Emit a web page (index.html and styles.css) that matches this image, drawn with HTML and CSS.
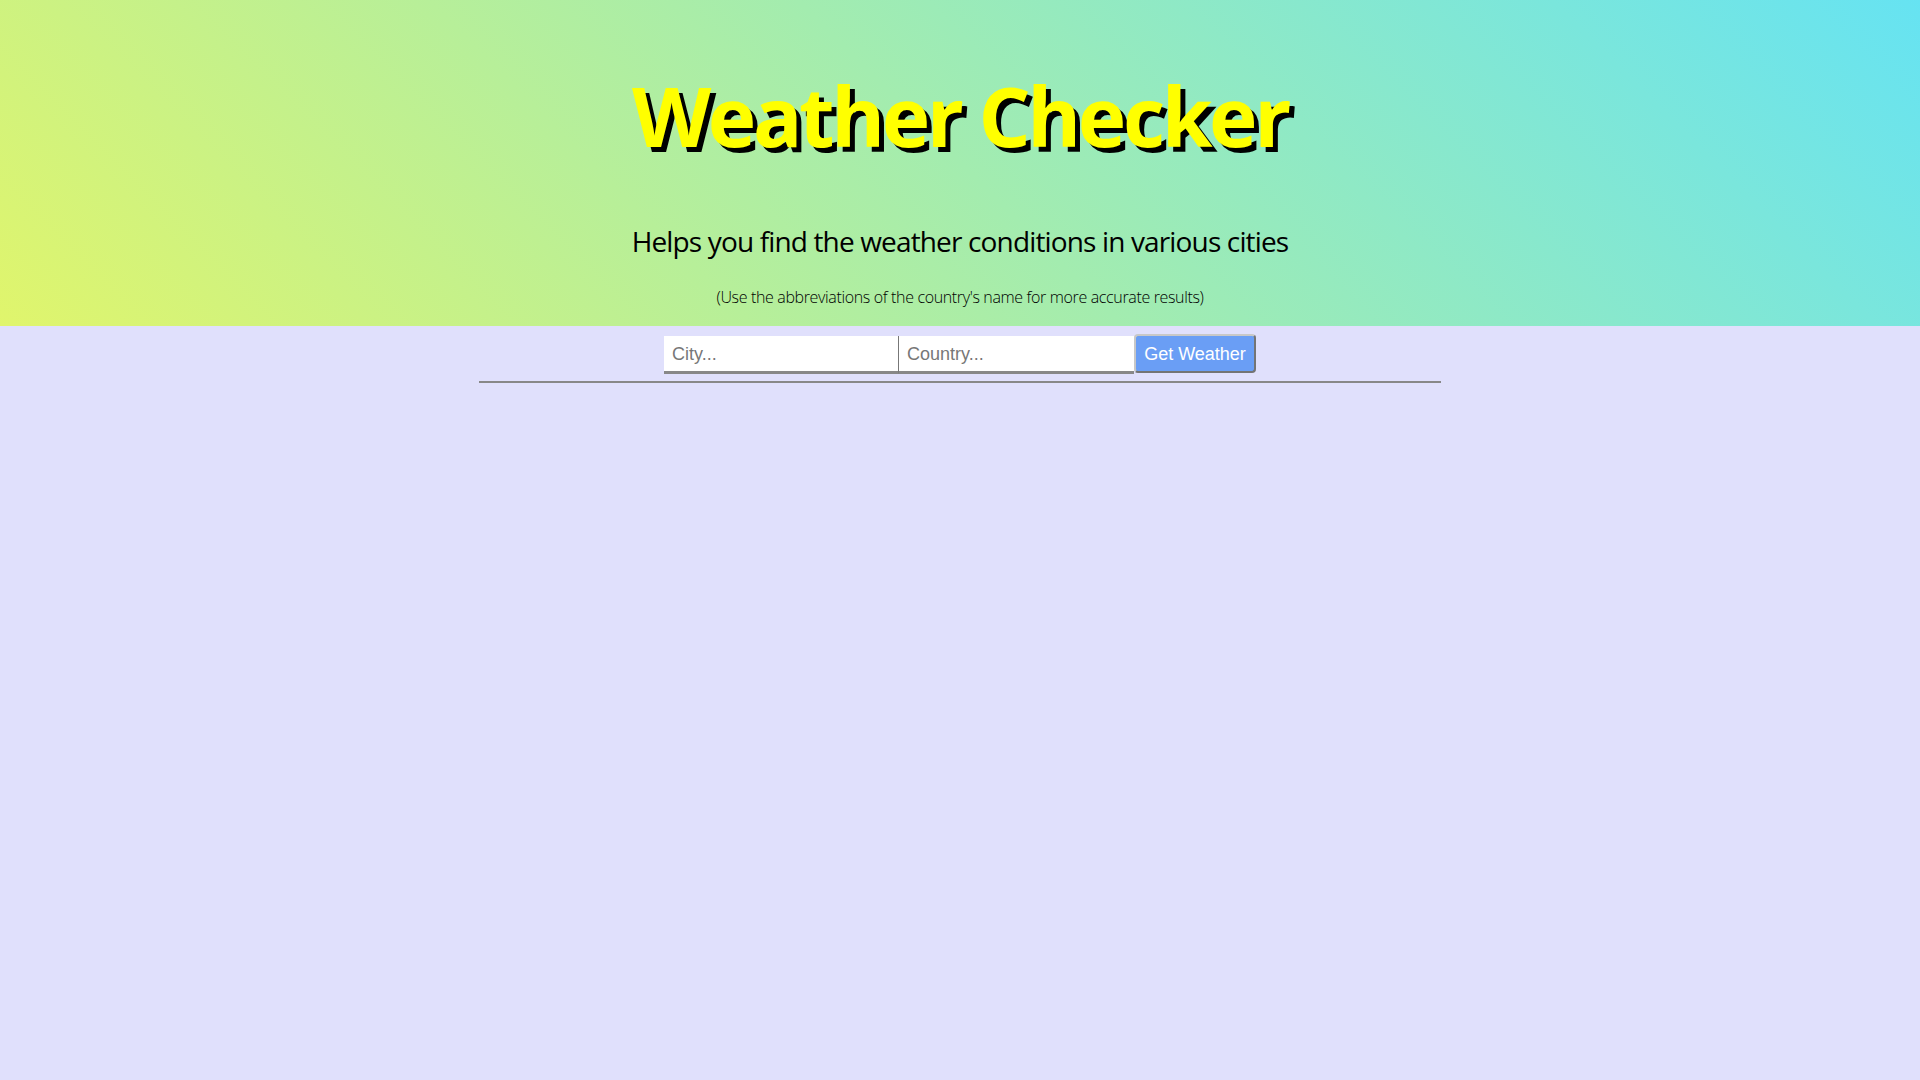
FILE: index.html
```html
<!DOCTYPE html>
<html lang="en">
<head>
<meta charset="utf-8">
<title>Weather Checker</title>
<link rel="stylesheet" href="styles.css">
</head>
<body>
<header class="hero">
  <h1 class="title">Weather Checker</h1>
  <p class="subtitle">Helps you find the weather conditions in various cities</p>
  <p class="note">(Use the abbreviations of the country's name for more accurate results)</p>
</header>
<form class="search" onsubmit="return false">
  <input class="field field-city" type="text" placeholder="City...">
  <input class="field field-country" type="text" placeholder="Country...">
  <button class="btn" type="submit">Get Weather</button>
</form>
<div class="divider"></div>
</body>
</html>
```

FILE: styles.css
```css
html, body {
  margin: 0;
  padding: 0;
}
body {
  background: #e0e0fc;
  font-family: "Open Sans", "Liberation Sans", sans-serif;
  min-height: 1080px;
}
.hero {
  height: 326px;
  box-sizing: border-box;
  display: flex;
  flex-direction: column;
  align-items: center;
  background: linear-gradient(45deg, #e0f56c 0%, #66e3f2 100%);
}
.title {
  margin: 74px 0 0;
  font-size: 82px;
  line-height: 1;
  font-weight: 700;
  letter-spacing: -3.4px;
  color: #ffff00;
  text-shadow: 5px 5px 0 #000;
}
.subtitle {
  margin: 71px 0 0;
  font-size: 28px;
  line-height: 1;
  font-weight: 400;
  letter-spacing: -0.85px;
  color: #000;
}
.note {
  margin: 34px 0 0;
  font-size: 16px;
  line-height: 1;
  font-weight: 300;
  letter-spacing: -0.35px;
  color: #000;
}
.search {
  display: flex;
  justify-content: center;
  align-items: flex-start;
  margin: 8px 0 0;
}
.field {
  box-sizing: border-box;
  height: 38px;
  margin-top: 2px;
  padding: 2px 8px 0;
  border: none;
  border-bottom: 3px solid #888;
  background: #fff;
  font-family: "Liberation Sans", Arial, sans-serif;
  font-size: 18px;
  color: #222;
  outline: none;
}
.field::placeholder {
  color: #777;
}
.field-city {
  width: 235px;
  border-right: 1px solid #777;
}
.field-country {
  width: 235px;
}
.btn {
  box-sizing: border-box;
  width: 122px;
  height: 39px;
  padding: 2px 6px 0;
  border: 2px outset #c8c8c8;
  border-radius: 4px;
  background: #6a9ef5;
  color: #fff;
  font-family: "Liberation Sans", Arial, sans-serif;
  font-size: 18px;
  cursor: pointer;
}
.divider {
  width: 962px;
  height: 2px;
  margin: 7px auto 0;
  background: #888;
}
```
